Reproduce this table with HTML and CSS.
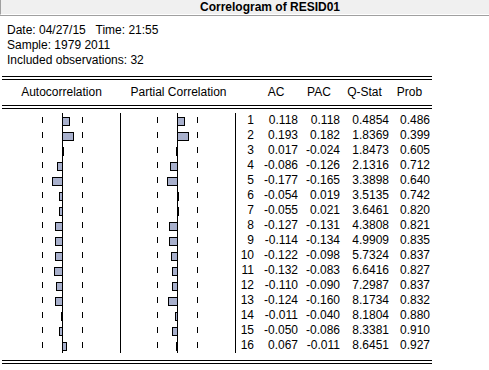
FILE: index.html
```html
<!DOCTYPE html>
<html lang="en">

<head>
    <meta charset="UTF-8">
    <title>Correlogram of RESID01</title>
    <link rel="stylesheet" href="styles.css">
</head>

<body>
    <div class="titlebar">Correlogram of RESID01</div>

    <div class="info">
        <div>Date: 04/27/15&nbsp;&nbsp; Time: 21:55</div>
        <div>Sample: 1979 2011</div>
        <div>Included observations: 32</div>
    </div>

    <div class="correlogram">
        <div class="rule"></div>
        <div class="row head">
            <div>Autocorrelation</div>
            <div>Partial Correlation</div>
            <div></div>
            <div>AC</div>
            <div>PAC</div>
            <div>Q-Stat</div>
            <div>Prob</div>
        </div>
        <div class="rule"></div>
        <div class="rows" id="rows"></div>
        <div class="rule"></div>
    </div>

    <script>
        document.addEventListener("DOMContentLoaded", function () {
            var data = [
                [1, 0.118, 0.118, "0.4854", "0.486"],
                [2, 0.193, 0.182, "1.8369", "0.399"],
                [3, 0.017, -0.024, "1.8473", "0.605"],
                [4, -0.086, -0.126, "2.1316", "0.712"],
                [5, -0.177, -0.165, "3.3898", "0.640"],
                [6, -0.054, 0.019, "3.5135", "0.742"],
                [7, -0.055, 0.021, "3.6461", "0.820"],
                [8, -0.127, -0.131, "4.3808", "0.821"],
                [9, -0.114, -0.134, "4.9909", "0.835"],
                [10, -0.122, -0.098, "5.7324", "0.837"],
                [11, -0.132, -0.083, "6.6416", "0.827"],
                [12, -0.110, -0.090, "7.2987", "0.837"],
                [13, -0.124, -0.160, "8.1734", "0.832"],
                [14, -0.011, -0.040, "8.1804", "0.880"],
                [15, -0.050, -0.086, "8.3381", "0.910"],
                [16, 0.067, -0.011, "8.6451", "0.927"]
            ];
            var scale = 58;
            var rows = document.getElementById("rows");

            // bar starts on the axis and grows left or right
            function bar(value, axis) {
                var w = Math.max(2, Math.round(Math.abs(value) * scale) + 1);
                var left = value >= 0 ? axis : axis - w + 1;
                return '<div class="bar" style="margin-left:' + left + 'px;width:' + w + 'px"></div>';
            }

            data.forEach(function (d) {
                var row = document.createElement("div");
                row.className = "row";
                row.innerHTML =
                    '<div class="graph acf">' + bar(d[1], 60) + '</div>' +
                    '<div class="graph pacf">' + bar(d[2], 56) + '</div>' +
                    '<div class="num">' + d[0] + '</div>' +
                    '<div class="num">' + d[1].toFixed(3) + '</div>' +
                    '<div class="num">' + d[2].toFixed(3) + '</div>' +
                    '<div class="num">' + d[3] + '</div>' +
                    '<div class="num">' + d[4] + '</div>';
                rows.appendChild(row);
            });
        });
    </script>
</body>

</html>
```

FILE: styles.css
```css
* {
    box-sizing: border-box;
}

body {
    margin: 0;
    font-family: "Liberation Sans", Arial, sans-serif;
    font-size: 12px;
    color: #000;
    background-color: #fff;
}

.titlebar {
    height: 15px;
    line-height: 14px;
    padding-left: 199px;
    font-weight: bold;
    background-color: #f0f0f0;
    border-left: 1px solid #a0a0a0;
    border-bottom: 1px solid #fff;
    box-shadow: 0 1px 0 #a0a0a0;
}

.info {
    padding: 8px 0 0 7px;
    line-height: 15px;
}

.correlogram {
    width: 430px;
    margin: 8px 0 0 2px;
}

.rule {
    height: 4px;
    border-top: 1px solid #000;
    border-bottom: 1px solid #000;
}

.row {
    display: grid;
    grid-template-columns: 119px 115px 18px 44px 42px 49px 41px;
    line-height: 15px;
    height: 15px;
}

.row.head {
    height: 25px;
    line-height: 25px;
    text-align: center;
}

.rows {
    padding: 4px 0 7px;
}

.num {
    text-align: right;
    white-space: nowrap;
}

.graph {
    border-right: 1px solid #000;
}

.acf {
    background:
        linear-gradient(#000, #000) 60px 0 / 1px 100% no-repeat,
        linear-gradient(#000, #000) 40px 4px / 1px 6px no-repeat,
        linear-gradient(#000, #000) 80px 4px / 1px 6px no-repeat;
}

.pacf {
    background:
        linear-gradient(#000, #000) 56px 0 / 1px 100% no-repeat,
        linear-gradient(#000, #000) 36px 4px / 1px 6px no-repeat,
        linear-gradient(#000, #000) 76px 4px / 1px 6px no-repeat;
}

.bar {
    height: 9px;
    margin-top: 4px;
    border: 1px solid #000;
    background-color: #a8b0cc;
}
```
